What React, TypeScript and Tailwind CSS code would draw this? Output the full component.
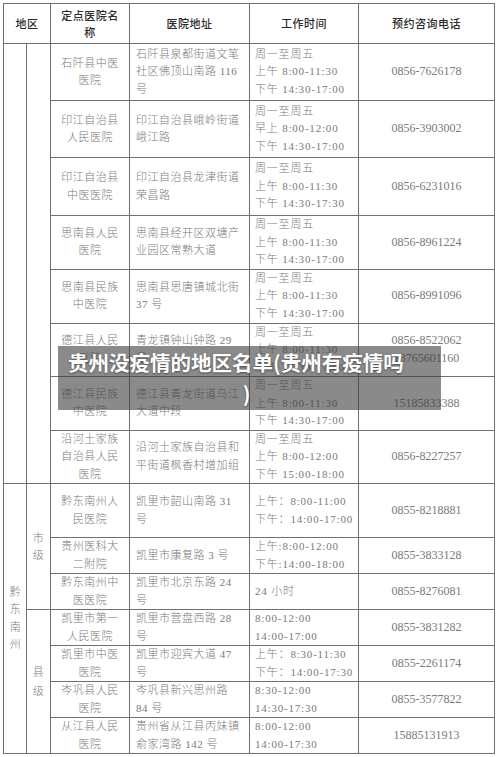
import React from 'react';

type Row = {
  h: string;
  name: string[];
  addr: string[];
  hours: string[];
  phone: string[];
};

// 铜仁片区（地区栏为空）
const topRows: Row[] = [
  { h: 'h-[57px]', name: ['石阡县中医', '医院'], addr: ['石阡县泉都街道文笔', '社区佛顶山南路 116', '号'], hours: ['周一至周五', '上午 8:00-11:30', '下午 14:30-17:00'], phone: ['0856-7626178'] },
  { h: 'h-[57px]', name: ['印江自治县', '人民医院'], addr: ['印江自治县峨岭街道', '峨江路'], hours: ['周一至周五', '早上 8:00-12:00', '下午 14:30-17:00'], phone: ['0856-3903002'] },
  { h: 'h-[58px]', name: ['印江自治县', '中医医院'], addr: ['印江自治县龙津街道', '荣昌路'], hours: ['周一至周五', '上午 8:00-11:30', '下午 14:30-17:30'], phone: ['0856-6231016'] },
  { h: 'h-[53px]', name: ['思南县人民', '医院'], addr: ['思南县经开区双塘产', '业园区常熟大道'], hours: ['周一至周五', '上午 8:00-11:30', '下午 14:30-17:00'], phone: ['0856-8961224'] },
  { h: 'h-[54px]', name: ['思南县民族', '中医院'], addr: ['思南县思唐镇城北街', '37 号'], hours: ['周一至周五', '上午 8:00-11:30', '下午 14:30-17:00'], phone: ['0856-8991096'] },
  { h: 'h-[53px]', name: ['德江县人民', '医院'], addr: ['青龙镇钟山钟路 29', '号'], hours: ['周一至周五', '上午 8:00-11:30', '下午 14:30-17:00'], phone: ['0856-8522062', '13765601160'] },
  { h: 'h-[53px]', name: ['德江县民族', '中医院'], addr: ['德江县青龙街道乌江', '大道中段'], hours: ['周一至周五', '上午 8:00-11:30', '下午 14:30-17:00'], phone: ['15185833388'] },
  { h: 'h-[53px]', name: ['沿河土家族', '自治县人民', '医院'], addr: ['沿河土家族自治县和', '平街道枫香村增加组'], hours: ['周一至周五', '上午 8:00-12:00', '下午 15:00-18:00'], phone: ['0856-8227257'] },
];

// 黔东南州
const cityRows: Row[] = [
  { h: 'h-[54px]', name: ['黔东南州人', '民医院'], addr: ['凯里市韶山南路 31', '号'], hours: ['上午：8:00-11:00', '下午：14:00-17:00'], phone: ['0855-8218881'] },
  { h: 'h-[35px]', name: ['贵州医科大', '二附院'], addr: ['凯里市康复路 3 号'], hours: ['上午:8:00-12:00', '下午:14:00-18:00'], phone: ['0855-3833128'] },
  { h: 'h-[36px]', name: ['黔东南州中', '医医院'], addr: ['凯里市北京东路 24', '号'], hours: ['24 小时'], phone: ['0855-8276081'] },
];

const countyRows: Row[] = [
  { h: 'h-[36px]', name: ['凯里市第一', '人民医院'], addr: ['凯里市营盘西路 28', '号'], hours: ['8:00-12:00', '14:00-17:00'], phone: ['0855-3831282'] },
  { h: 'h-[35px]', name: ['凯里市中医', '医院'], addr: ['凯里市迎宾大道 47', '号'], hours: ['上午：8:30-11:30', '下午：14:00-17:30'], phone: ['0855-2261174'] },
  { h: 'h-[36px]', name: ['岑巩县人民', '医院'], addr: ['岑巩县新兴思州路', '84 号'], hours: ['8:30-12:00', '14:30-17:30'], phone: ['0855-3577822'] },
  { h: 'h-[35px]', name: ['从江县人民', '医院'], addr: ['贵州省从江县丙妹镇', '俞家湾路 142 号'], hours: ['8:00-12:00', '14:00-17:30'], phone: ['15885131913'] },
];

const Lines = ({ lines }: { lines: string[] }) => (
  <>
    {lines.map((l, i) => (
      <React.Fragment key={i}>
        {i > 0 && <br />}
        {l}
      </React.Fragment>
    ))}
  </>
);

const cell = 'border border-[#707070] p-0 align-middle';

const BodyCells = ({ row }: { row: Row }) => (
  <>
    <td className={`${cell} text-center`}><Lines lines={row.name} /></td>
    <td className={`${cell} pl-[6px] text-left`}><Lines lines={row.addr} /></td>
    <td className={`${cell} pl-[5px] text-left tracking-[0.8px]`}><Lines lines={row.hours} /></td>
    <td className={`${cell} text-center text-[12px] tracking-normal`}><Lines lines={row.phone} /></td>
  </>
);

const App: React.FC = () => {
  return (
    <div className="relative w-[500px] h-[757px] bg-white pl-[3px] pt-[3px]">
      <table className="table-fixed border-collapse w-[491px] font-['Liberation_Serif','Noto_Sans_CJK_SC',serif] font-light text-[11px] tracking-[0.5px] leading-[17.5px] text-[#7a7a7a]">
        <colgroup>
          <col className="w-[23px]" />
          <col className="w-[24px]" />
          <col className="w-[79px]" />
          <col className="w-[120px]" />
          <col className="w-[109px]" />
          <col className="w-[136px]" />
        </colgroup>
        <thead>
          <tr className="h-[40px] font-['Noto_Sans_CJK_SC',sans-serif] text-[#2a2a2a] text-[11px] leading-[17px]">
            <th colSpan={2} className={`${cell} font-medium`}>地区</th>
            <th className={`${cell} font-medium`}>定点医院名<br />称</th>
            <th className={`${cell} font-medium`}>医院地址</th>
            <th className={`${cell} font-medium`}>工作时间</th>
            <th className={`${cell} font-medium`}>预约咨询电话</th>
          </tr>
        </thead>
        <tbody>
          {topRows.map((row, i) => (
            <tr key={'t' + i} className={row.h}>
              {i === 0 && (
                <>
                  <td rowSpan={topRows.length} className={cell}></td>
                  <td rowSpan={topRows.length} className={cell}></td>
                </>
              )}
              <BodyCells row={row} />
            </tr>
          ))}
          {cityRows.map((row, i) => (
            <tr key={'c' + i} className={row.h}>
              {i === 0 && (
                <>
                  <td rowSpan={cityRows.length + countyRows.length} className={`${cell} text-center pl-[1px]`}>
                    黔<br />东<br />南<br />州
                  </td>
                  <td rowSpan={cityRows.length} className={`${cell} text-center leading-[17px]`}>
                    市<br />级
                  </td>
                </>
              )}
              <BodyCells row={row} />
            </tr>
          ))}
          {countyRows.map((row, i) => (
            <tr key={'x' + i} className={row.h}>
              {i === 0 && (
                <td rowSpan={countyRows.length} className={`${cell} text-center leading-[19px]`}>
                  县<br />级
                </td>
              )}
              <BodyCells row={row} />
            </tr>
          ))}
        </tbody>
      </table>

      {/* 标题浮层 */}
      <div className="absolute left-[58px] top-[346px] w-[383px] h-[64px] bg-[rgba(60,60,60,0.6)] pl-[10px] pr-[10px] py-[1px]">
        <p className="text-left font-['Noto_Sans_CJK_SC',sans-serif] font-bold text-[20.5px] leading-[31px] text-white [text-shadow:0_1px_2px_rgba(0,0,0,0.45)]">
          贵州没疫情的地区名单(贵州有疫情吗
          <span className="block text-center pr-[6px]">)</span>
        </p>
      </div>
    </div>
  );
};

export default App;
